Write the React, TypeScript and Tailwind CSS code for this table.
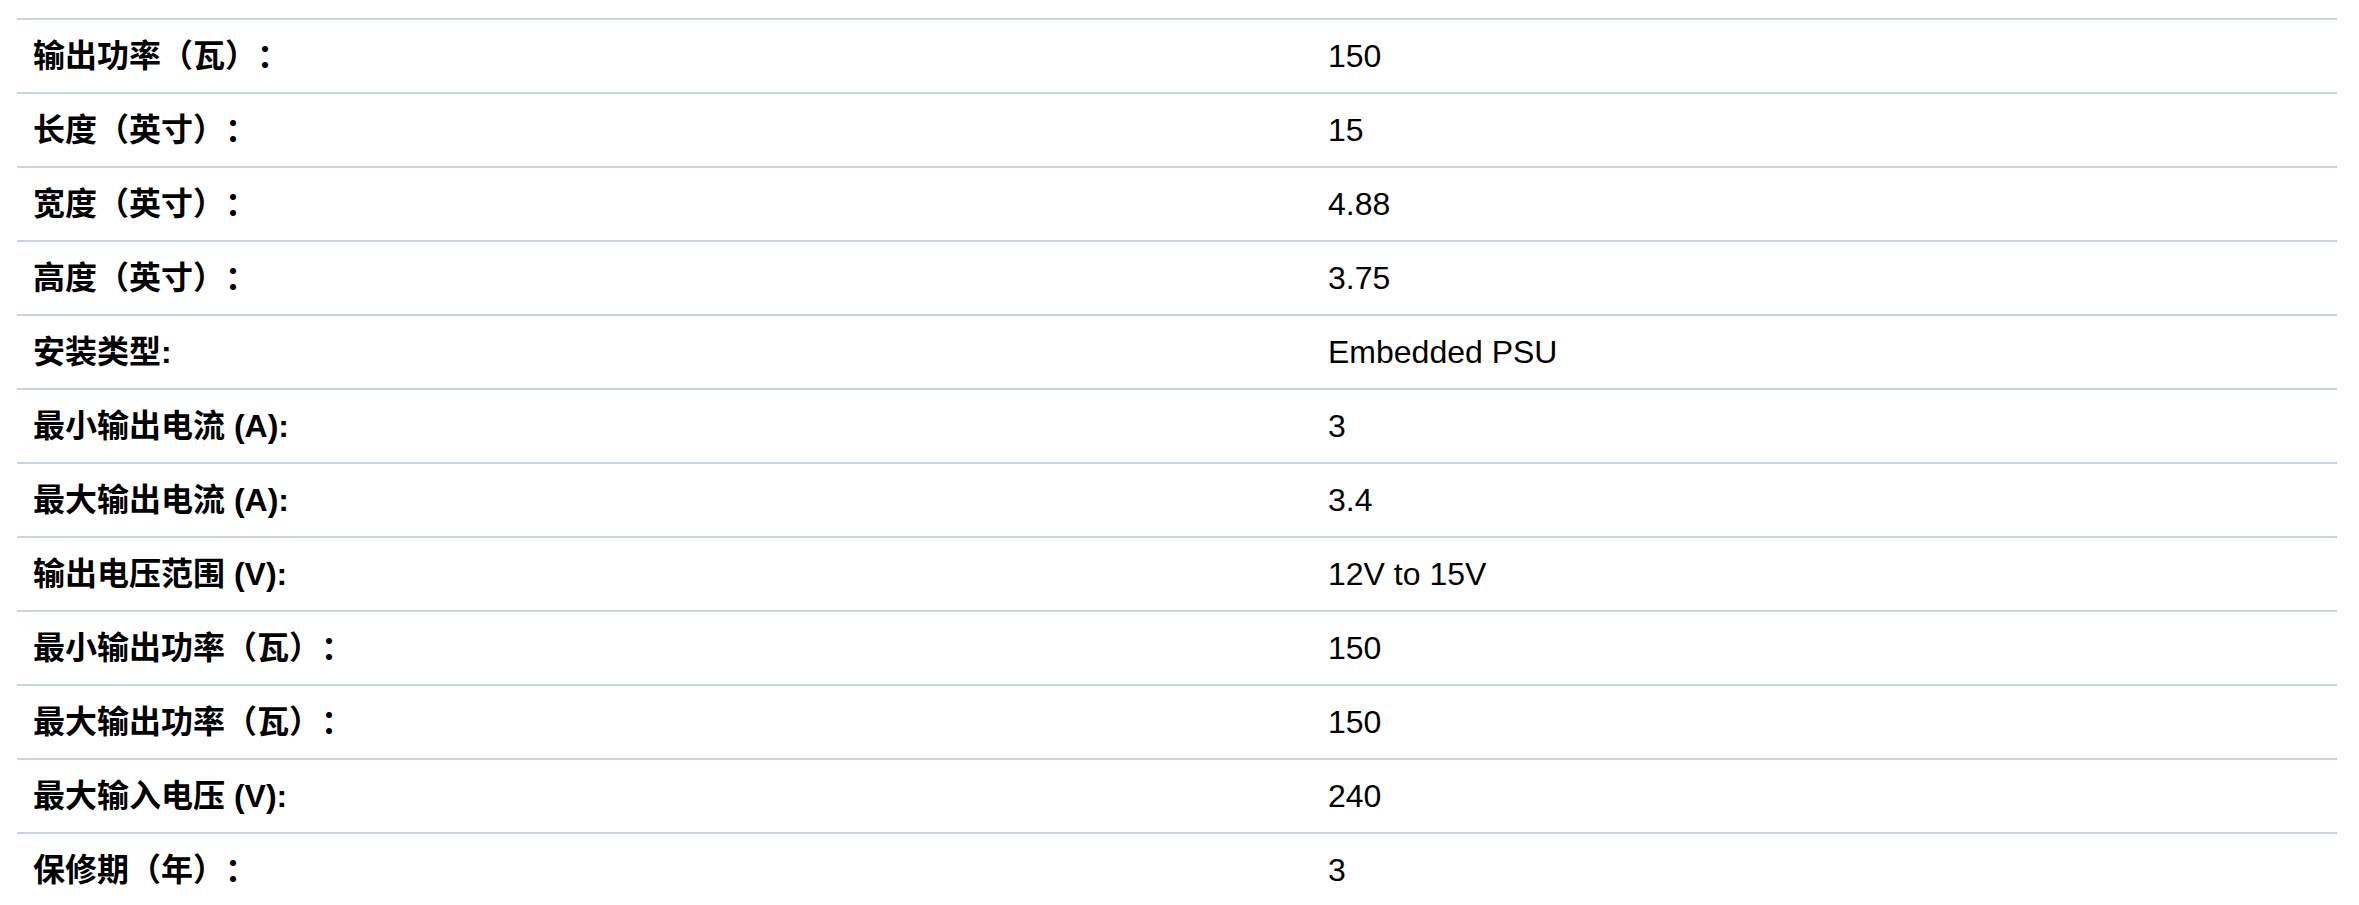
import React from 'react';

const specs = [
  { label: '输出功率（瓦）：', value: '150' },
  { label: '长度（英寸）：', value: '15' },
  { label: '宽度（英寸）：', value: '4.88' },
  { label: '高度（英寸）：', value: '3.75' },
  { label: '安装类型:', value: 'Embedded PSU' },
  { label: '最小输出电流 (A):', value: '3' },
  { label: '最大输出电流 (A):', value: '3.4' },
  { label: '输出电压范围 (V):', value: '12V to 15V' },
  { label: '最小输出功率（瓦）：', value: '150' },
  { label: '最大输出功率（瓦）：', value: '150' },
  { label: '最大输入电压 (V):', value: '240' },
  { label: '保修期（年）：', value: '3' },
];

export default function App() {
  return (
    <div className="bg-white min-h-screen pt-[18px] text-black font-['Liberation_Sans','Noto_Sans_CJK_SC',sans-serif] [text-spacing-trim:space-all]">
      <div className="ml-[17px] w-[2320px]">
        {specs.map((row, i) => (
          <div
            key={i}
            className="grid grid-cols-[1295px_1fr] h-[74px] border-t-2 border-[#cad4e1] items-center text-[32px] leading-none"
          >
            <div className="pl-4 font-bold">{row.label}</div>
            <div className="pl-4">{row.value}</div>
          </div>
        ))}
      </div>
    </div>
  );
}
